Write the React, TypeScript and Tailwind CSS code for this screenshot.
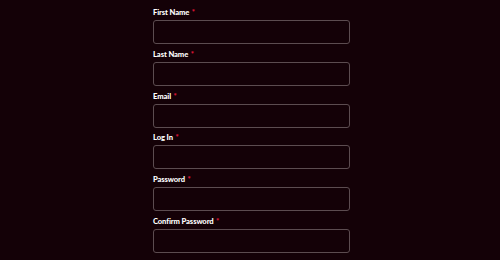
import React from 'react';

const fields = ['First Name', 'Last Name', 'Email', 'Log In', 'Password', 'Confirm Password'];

export default function App() {
  return (
    <div className="w-[500px] h-[260px] overflow-hidden bg-[#140107] font-['Lato','Liberation_Sans',sans-serif]">
      <form className="ml-[153px] w-[197px] pt-[6px] flex flex-col gap-[3.8px]">
        {fields.map((f) => (
          <div key={f} className="flex flex-col">
            <label className="h-[12px] mb-[2px] text-[7.6px] leading-[12px] font-black text-white tracking-[-0.1px]">
              {f}<span className="ml-[2.5px] text-[#e4163a]">*</span>
            </label>
            <input
              type={f.includes('Password') ? 'password' : 'text'}
              className="h-[24px] w-full rounded-[3px] border border-[#5c4c50] bg-transparent outline-none"
            />
          </div>
        ))}
      </form>
    </div>
  );
}
